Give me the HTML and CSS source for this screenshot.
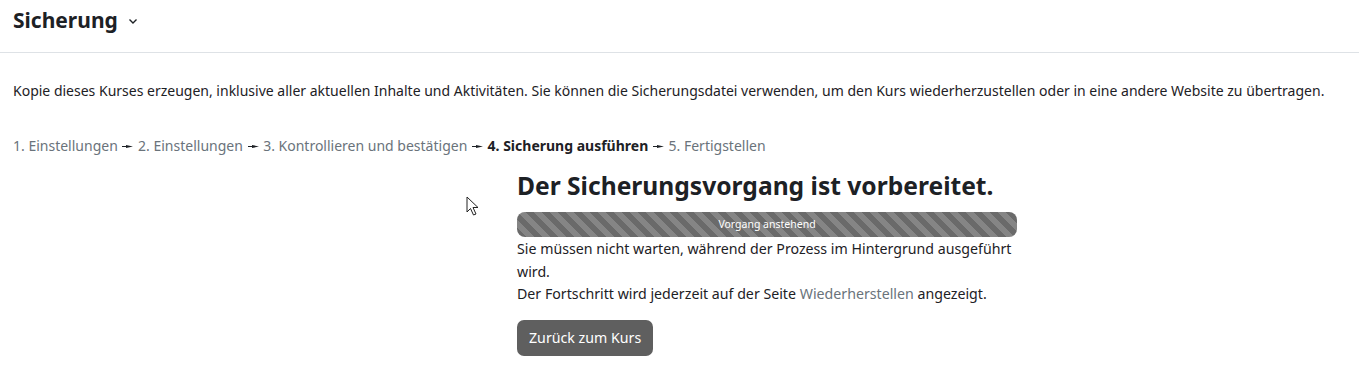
FILE: index.html
```html
<!DOCTYPE html>
<html lang="de">
<head>
  <meta charset="UTF-8">
  <title>Sicherung</title>
  <link rel="stylesheet" href="styles.css">
</head>
<body>
  <div class="page-header">
    <h1 class="page-title">Sicherung</h1>
    <svg class="title-caret" width="10" height="7" viewBox="0 0 10 7">
      <path d="M1.5 1.5 L5 5 L8.5 1.5" fill="none" stroke="#1d2125" stroke-width="1.4"/>
    </svg>
  </div>

  <div class="content">
    <p class="intro">Kopie dieses Kurses erzeugen, inklusive aller aktuellen Inhalte und Aktivitäten. Sie können die Sicherungsdatei verwenden, um den Kurs wiederherzustellen oder in eine andere Website zu übertragen.</p>

    <div class="steps">
      <span class="step">1. Einstellungen</span>
      <svg class="sep" width="11" height="7" viewBox="0 0 11 7"><path d="M0 3 H4 V2 L11 3.5 L4 5 V4 H0 Z" fill="#1d2125"/></svg>
      <span class="step">2. Einstellungen</span>
      <svg class="sep" width="11" height="7" viewBox="0 0 11 7"><path d="M0 3 H4 V2 L11 3.5 L4 5 V4 H0 Z" fill="#1d2125"/></svg>
      <span class="step">3. Kontrollieren und bestätigen</span>
      <svg class="sep" width="11" height="7" viewBox="0 0 11 7"><path d="M0 3 H4 V2 L11 3.5 L4 5 V4 H0 Z" fill="#1d2125"/></svg>
      <span class="step current">4. Sicherung ausführen</span>
      <svg class="sep" width="11" height="7" viewBox="0 0 11 7"><path d="M0 3 H4 V2 L11 3.5 L4 5 V4 H0 Z" fill="#1d2125"/></svg>
      <span class="step">5. Fertigstellen</span>
    </div>

    <div class="progress-box">
      <h2 class="progress-title">Der Sicherungsvorgang ist vorbereitet.</h2>
      <div class="progress">
        <div class="progress-bar">Vorgang anstehend</div>
      </div>
      <p class="note">Sie müssen nicht warten, während der Prozess im Hintergrund ausgeführt wird.<br>
        Der Fortschritt wird jederzeit auf der Seite <a href="#">Wiederherstellen</a> angezeigt.</p>
      <button class="btn">Zurück zum Kurs</button>
    </div>
  </div>

  <!-- mouse pointer in the screenshot -->
  <svg class="cursor" width="14" height="22" viewBox="0 0 14 22">
    <path d="M1 1 L1 16 L4.5 12.5 L7.5 19 L10 18 L7 11.5 L12 11.5 Z" fill="#fff" stroke="#222" stroke-width="1"/>
  </svg>
</body>
</html>
```

FILE: styles.css
```css
body {
  margin: 0;
  background: #fff;
  color: #1d2125;
  font-family: "Noto Sans", "Open Sans", sans-serif;
  font-size: 14px;
}
.page-header {
  height: 52px;
  border-bottom: 1px solid #dee2e6;
  padding: 0 13px;
  display: flex;
  align-items: flex-start;
  gap: 10px;
}
.page-title {
  margin: 4px 0 0;
  font-size: 21px;
  font-weight: 700;
  line-height: 32px;
}
.title-caret {
  margin-top: 18px;
}
.content {
  padding: 0 13px;
}
.intro {
  margin: 27px 0 0;
  line-height: 22px;
}
.steps {
  margin-top: 33px;
  line-height: 22px;
  color: #6a737b;
}
.steps .current {
  color: #1d2125;
  font-weight: 700;
}
.steps .sep {
  margin: 0 1px;
  vertical-align: 1px;
}
.progress-box {
  width: 500px;
  margin: 11px 0 0 504px;
}
.progress-title {
  margin: 0;
  font-size: 24.6px;
  font-weight: 700;
  line-height: 36px;
}
.progress {
  margin-top: 8px;
  height: 25px;
  border-radius: 8px;
  overflow: hidden;
  background: #6a6a6a;
}
.progress-bar {
  height: 100%;
  color: #fff;
  font-size: 10.5px;
  line-height: 25px;
  text-align: center;
  background-image: linear-gradient(45deg, rgba(255,255,255,.18) 25%, transparent 25%, transparent 50%, rgba(255,255,255,.18) 50%, rgba(255,255,255,.18) 75%, transparent 75%, transparent);
  background-size: 16px 16px;
}
.note {
  margin: 1px 0 0;
  line-height: 22.5px;
  font-size: 14.2px;
}
.note a {
  color: #6a737b;
  text-decoration: none;
}
.btn {
  margin-top: 14px;
  height: 36px;
  padding: 0 12px;
  border: none;
  border-radius: 7px;
  background: #5f5f5f;
  color: #fff;
  font-family: inherit;
  font-size: 14.2px;
  cursor: pointer;
}
.cursor {
  position: absolute;
  left: 466px;
  top: 196px;
}
```
